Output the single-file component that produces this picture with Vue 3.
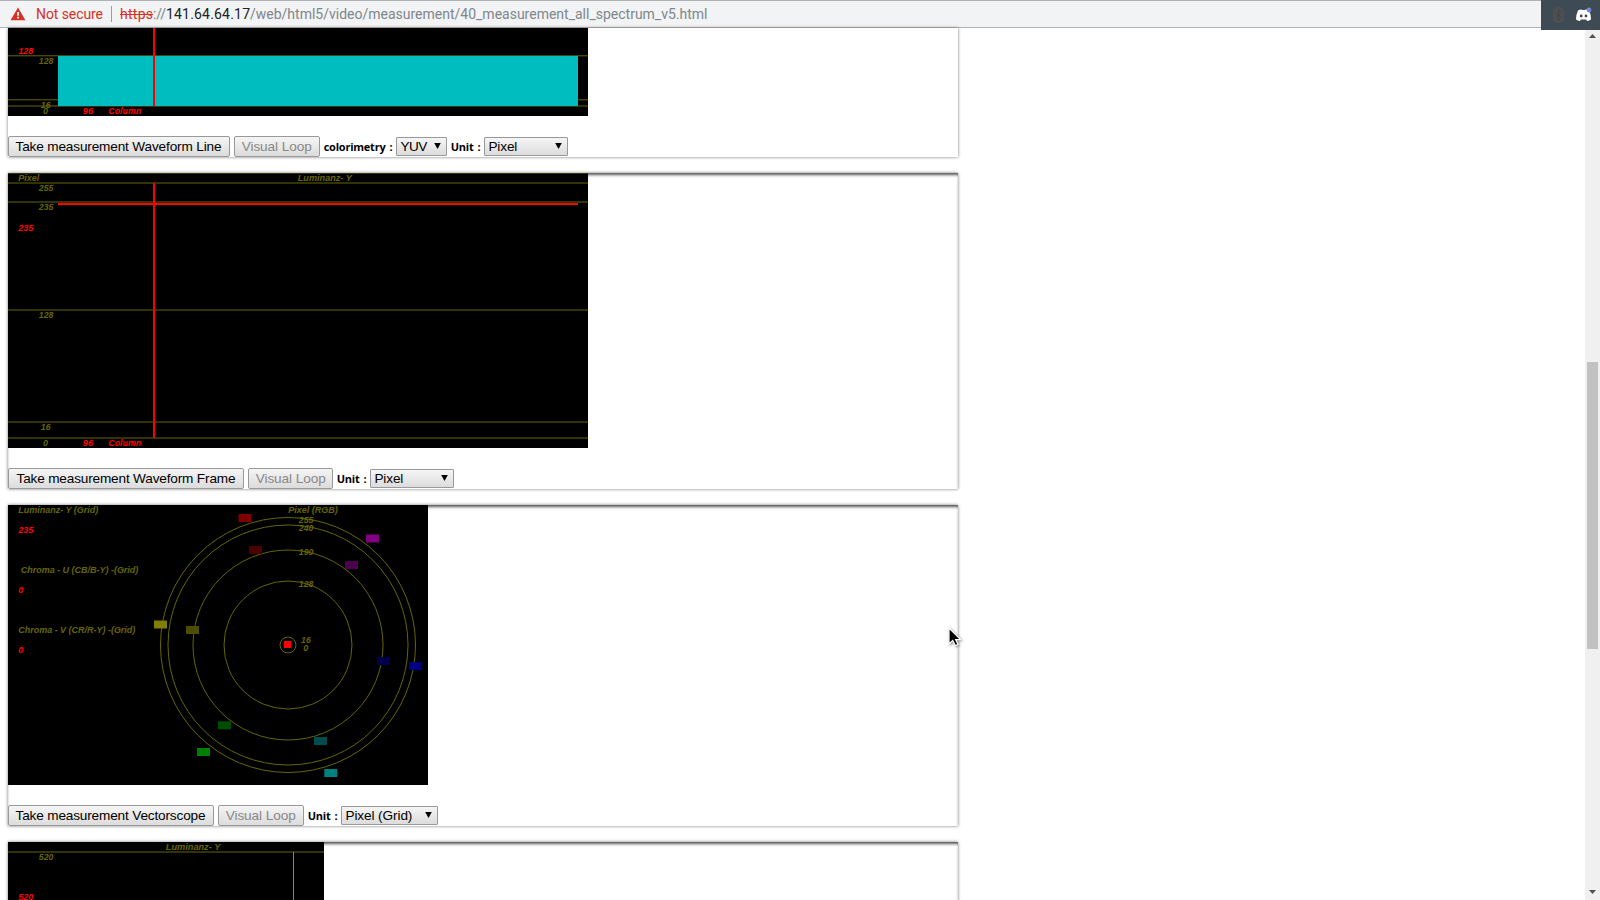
<script setup>
const dim = '#666600'
const red = '#ff0000'
// text item: [x, baseline, width, content, colour]
const panels = [
  {
    id: 'line', x: 8, y: 28, w: 580, h: 88, boxH: 129,
    lines: [55.8, 99.8, 106],
    rects: [[58, 56, 520, 50, '#00bec0'], [153, 28, 2, 78, red]],
    texts: [[18.5, 54, 15, '128', red], [39, 64, 14.5, '128', dim], [41, 108, 9.7, '16', dim], [43.3, 114, 5, '0', dim], [83, 114, 10.3, '96', red], [108.5, 114, 33, 'Column', red]],
    button: 'Take measurement Waveform Line', bw: 222, tw: 206, vw: 86,
    controls: [{ label: 'colorimetry :', lw: 72, value: 'YUV', sw: 51 }, { label: 'Unit :', lw: 33, value: 'Pixel', sw: 84 }]
  },
  {
    id: 'frame', x: 8, y: 173, w: 580, h: 275, boxH: 316,
    lines: [173, 183, 202, 310, 422, 438],
    rects: [[58, 203, 520, 2, red], [153, 183, 2, 255, red]],
    texts: [[18.5, 181, 21, 'Pixel', dim], [298, 181, 54, 'Luminanz- Y', dim], [39, 191, 14.5, '255', dim], [39, 210, 14.5, '235', dim], [18.5, 231, 15, '235', red], [39, 318, 14.5, '128', dim], [41, 430, 9.7, '16', dim], [43.3, 446, 5, '0', dim], [83, 446, 10.3, '96', red], [108.5, 446, 33, 'Column', red]],
    button: 'Take measurement Waveform Frame', bw: 236, tw: 219, vw: 85,
    controls: [{ label: 'Unit :', lw: 33, value: 'Pixel', sw: 84 }]
  },
  {
    id: 'vector', x: 8, y: 505, w: 420, h: 280, boxH: 321,
    lines: [],
    circles: [127.5, 120, 95, 64, 8],
    rects: [
      [238.5, 514, 13, 8, '#800000'], [249, 546, 13, 8, '#4d0000'], [366, 534.5, 13, 8, '#800080'], [345, 561, 13, 8, '#4d004d'],
      [377, 657, 13, 8, '#00004d'], [409, 662, 13, 8, '#000080'], [314, 737, 13, 8, '#004d4d'], [324.3, 769, 13, 8, '#008080'],
      [218, 721.3, 13, 8, '#004d00'], [197, 748, 13, 8, '#008000'], [154, 620.5, 13, 8, '#808000'], [186, 626, 13, 8, '#4d4d00'],
      [284, 641, 7, 7, red]
    ],
    texts: [[18.5, 513, 80, 'Luminanz- Y (Grid)', dim], [18.5, 533, 15, '235', red], [21, 573, 117.5, 'Chroma - U (CB/B-Y) -(Grid)', dim], [18.5, 593, 5, '0', red], [18.5, 633, 117, 'Chroma - V (CR/R-Y) -(Grid)', dim], [18.5, 653, 5, '0', red], [288.5, 513, 49.5, 'Pixel (RGB)', dim], [299, 523, 14.5, '255', dim], [299, 531, 14.5, '240', dim], [299, 555, 14.5, '190', dim], [299, 587, 14.5, '128', dim], [301.3, 643, 9.7, '16', dim], [303.5, 651, 5, '0', dim]],
    button: 'Take measurement Vectorscope', bw: 206, tw: 190, vw: 86,
    controls: [{ label: 'Unit :', lw: 33, value: 'Pixel (Grid)', sw: 97 }]
  },
  {
    id: 'histogram', x: 8, y: 842, w: 316, h: 90, boxH: 150,
    lines: [852],
    rects: [[293, 852, 1, 80, '#808080']],
    texts: [[166, 850, 54.5, 'Luminanz- Y', dim], [39, 860, 14.5, '520', dim], [18.5, 900, 15, '520', red]],
    controls: []
  }
]
const textWidths = { YUV: 27, Pixel: 29, 'Pixel (Grid)': 67 }
</script>

<template>
  <div class="screen">
    <header class="bar">
      <svg class="warn" width="16" height="14" viewBox="0 0 16 14"><path d="M8 .4 15.4 13.3H.6Z" fill="#d93025" /><path d="M7.2 5h1.7v3.7H7.2zM7.2 9.8h1.7v1.7H7.2z" fill="#fff" /></svg>
      <svg class="address" width="680" height="26" viewBox="0 0 680 26">
        <text x="0" y="18" textLength="67" fill="#d93025">Not secure</text>
        <path d="M75.5 5v16" stroke="#9a9da0" />
        <text x="84" y="18" textLength="33" fill="#d93025">https</text>
        <path d="M84 13.5h33" stroke="#d93025" />
        <text x="117" y="18" textLength="13" fill="#80868b">://</text>
        <text x="130" y="18" textLength="84" fill="#202124">141.64.64.17</text>
        <text x="214" y="18" textLength="457.5" fill="#80868b">/web/html5/video/measurement/40_measurement_all_spectrum_v5.html</text>
      </svg>
    </header>
    <div class="view">
      <main class="content">
        <section v-for="p in panels" :key="p.id" class="panel" :class="p.id" :style="{ height: p.boxH + 'px' }">
          <svg class="scope" :width="p.w" :height="p.h" :viewBox="`${p.x} ${p.y} ${p.w} ${p.h}`">
            <rect :x="p.x" :y="p.y" :width="p.w" :height="p.h" />
            <path v-for="y in p.lines" :key="y" :d="`M8 ${y}H600`" stroke="#666600" />
            <circle v-for="r in p.circles" :key="r" cx="288" cy="645" :r="r" fill="none" stroke="#666600" />
            <text v-for="(t, i) in p.texts" :key="'t' + i" :x="t[0] - 0.2" :y="t[1] + 0.2" :textLength="t[2]" :fill="t[4]" lengthAdjust="spacingAndGlyphs">{{ t[3] }}</text>
            <rect v-for="(r, i) in p.rects" :key="'r' + i" :x="r[0]" :y="r[1]" :width="r[2]" :height="r[3]" :fill="r[4]" />
          </svg>
          <div v-if="p.button" class="controls">
            <button :style="{ width: p.bw + 'px' }"><svg :width="p.tw" height="19"><text x="-0.5" y="14" :textLength="p.tw">{{ p.button }}</text></svg></button>
            <button disabled class="loop" :style="{ width: p.vw + 'px' }"><svg width="70" height="19"><text x="-0.3" y="14" textLength="70">Visual Loop</text></svg></button>
            <template v-for="c in p.controls" :key="c.label">
              <svg class="label" :width="c.lw" height="19"><text x="-0.3" y="14" :textLength="c.lw - 3">{{ c.label }}</text></svg>
              <div class="select" :style="{ width: c.sw + 'px' }">
                <svg :width="textWidths[c.value]" height="17"><text x="-0.6" y="13" :textLength="textWidths[c.value]">{{ c.value }}</text></svg>
                <svg class="arrow" width="7" height="6" viewBox="0 0 7 6"><path d="M.2 0h6.6L3.5 6Z" /></svg>
              </div>
            </template>
          </div>
        </section>
      </main>
      <aside class="scrollbar">
        <svg width="7" height="4" viewBox="0 0 7 4"><path d="M3.5 0 7 4H0Z" fill="#505050" /></svg>
        <div class="thumb"></div>
        <svg width="7" height="4" viewBox="0 0 7 4"><path d="M0 0H7L3.5 4Z" fill="#505050" /></svg>
      </aside>
    </div>
    <div class="tray">
      <svg width="59" height="30" viewBox="0 0 59 30">
        <rect x="12" y="7" width="11" height="16" rx="5" fill="#504f50" />
        <path d="m14.5 12 6 6-3 2.5v-11l3 2.5-6 6" fill="none" stroke="#3d464e" stroke-width=".9" />
        <path d="M37 10.5q3-1.5 4.5-.5h2q2-1 4.5.5 2 4 2 9-2.5 1.8-4 1.3l-1-1.3h-5l-1 1.3q-1.5.5-4-1.3 0-5 2-9" fill="#fff" />
        <circle cx="40.2" cy="16" r="1.4" fill="#3c4851" /><circle cx="45" cy="16" r="1.4" fill="#3c4851" />
        <circle cx="48" cy="10" r="2.4" fill="#7289da" />
      </svg>
    </div>
    <svg class="cursor" width="15" height="21" viewBox="0 0 15 21"><path d="M1 1v16l3.7-3.6 2.8 5.3 2.6-1.3-2.5-4.8h5Z" stroke="#fff" stroke-width="1.2" /></svg>
  </div>
</template>

<style scoped>
.screen { position: relative; width: 1600px; height: 900px; overflow: hidden; background: #fff; font-family: "Liberation Sans", Arial, sans-serif; }
svg { display: block; flex: none; overflow: visible; }
.bar { height: 28px; box-sizing: border-box; display: flex; background: #f1f3f4; border-top: 1px solid #b0b1b2; border-bottom: 1px solid #b0b1b2; }
.warn { margin: 6px 10px 0; }
.address { font: 14px Roboto, sans-serif; }
.view { display: flex; height: 872px; }
.content { flex: 1; padding-left: 8px; }
.panel { width: 950px; margin-bottom: 16px; box-shadow: 0 0 3px #777, inset 0 3px 3px -1px #555; }
.line { box-shadow: 0 0 3px #777; }
.scope { overflow: hidden; font: italic bold 9.6px "Liberation Sans", Arial, sans-serif; }
.controls { display: flex; align-items: center; padding-top: 20px; height: 21px; }
button { box-sizing: border-box; height: 21px; padding: 0; margin: 0 4px 0 0; display: flex; justify-content: center; align-items: center; border: 1px solid #999; border-radius: 2px; background: linear-gradient(#f5f5f5, #dcdcdc); font: 13.6px "Liberation Sans", Arial, sans-serif; }
button text { fill: #000; }
button:disabled text { fill: #888; }
.label { font: bold 11px "Open Sans", sans-serif; word-spacing: 1.5px; }
.select { box-sizing: border-box; height: 19px; margin-right: 4px; padding: 0 5px 0 4px; display: flex; justify-content: space-between; align-items: center; border: 1px solid #999; border-radius: 1px; background: linear-gradient(#f5f5f5, #dcdcdc); font-size: 13.6px; }
.arrow { margin-bottom: 2px; }
.scrollbar { width: 15px; background: #f0f0f0; display: flex; flex-direction: column; align-items: center; padding: 6px 0; box-sizing: border-box; }
.scrollbar svg:last-child { margin-top: auto; }
.thumb { flex: none; width: 11px; height: 287px; margin-top: 324px; background: #c1c1c1; }
.tray { position: absolute; right: 0; top: 0; width: 59px; height: 30px; background: #3f4b54; }
.cursor { position: absolute; left: 948px; top: 627px; filter: drop-shadow(1px 1px 1px #888); }
</style>
<style>
body { margin: 0; overflow: hidden; }
</style>
